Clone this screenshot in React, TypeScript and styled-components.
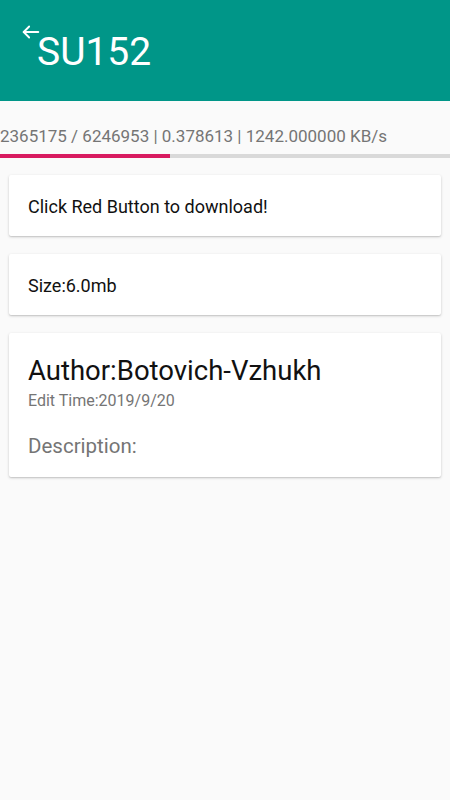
import styled, { createGlobalStyle } from "styled-components";

const GlobalStyle = createGlobalStyle`
  html, body {
    margin: 0;
    padding: 0;
    background: #fafafa;
    font-family: Roboto, "Noto Sans", sans-serif;
  }
`;

const Screen = styled.div`
  width: 450px;
  min-height: 800px;
  background: #fafafa;
`;

const Toolbar = styled.div`
  height: 101px;
  background: #009688;
  display: flex;
  align-items: flex-start;
  padding: 20px 0 0 20px;
  box-sizing: border-box;
  color: #ffffff;
`;

const BackIcon = styled.svg`
  width: 22px;
  height: 22px;
  margin-top: 1px;
  flex-shrink: 0;
`;

const Title = styled.div`
  font-size: 39px;
  line-height: 1;
  margin-left: -5px;
  margin-top: 13px;
`;

const Progress = styled.div`
  padding-top: 24px;
`;

const ProgressText = styled.div`
  font-size: 17px;
  color: #757575;
  white-space: nowrap;
  line-height: 22px;
`;

const Track = styled.div`
  margin-top: 7px;
  height: 4px;
  background: #d9d9d9;
`;

const Fill = styled.div`
  height: 100%;
  background: #d81b60;
`;

const Cards = styled.div`
  display: flex;
  flex-direction: column;
  gap: 18px;
  padding: 17px 9px 0;
`;

const Card = styled.div<{ $pad?: string }>`
  background: #ffffff;
  border-radius: 2px;
  box-shadow: 0 1px 3px rgba(0, 0, 0, 0.18), 0 1px 1px rgba(0, 0, 0, 0.08);
  padding: ${(p) => p.$pad || "19px"};
`;

const BodyText = styled.div`
  font-size: 18px;
  color: #111111;
  line-height: 24px;
`;

const Author = styled.div`
  font-size: 27.5px;
  color: #111111;
  line-height: 30px;
`;

const EditTime = styled.div`
  font-size: 16px;
  color: #757575;
  line-height: 20px;
  margin-top: 5px;
`;

const Description = styled.div`
  font-size: 20.5px;
  color: #757575;
  line-height: 24px;
  margin-top: 23px;
`;

const done = 2365175;
const total = 6246953;

export default function App() {
  return (
    <Screen>
      <GlobalStyle />
      <Toolbar>
        <BackIcon viewBox="0 0 24 24" fill="none" stroke="#fff" strokeWidth="2" strokeLinecap="round" strokeLinejoin="round">
          <path d="M20 12H4" />
          <path d="M10 6l-6 6 6 6" />
        </BackIcon>
        <Title>SU152</Title>
      </Toolbar>
      <Progress>
        <ProgressText>2365175 / 6246953 | 0.378613 | 1242.000000 KB/s</ProgressText>
        <Track>
          <Fill style={{ width: `${(done / total) * 100}%` }} />
        </Track>
      </Progress>
      <Cards>
        <Card $pad="20px 19px 17px">
          <BodyText>Click Red Button to download!</BodyText>
        </Card>
        <Card $pad="20px 19px 17px">
          <BodyText>Size:6.0mb</BodyText>
        </Card>
        <Card $pad="23px 19px 19px">
          <Author>Author:Botovich-Vzhukh</Author>
          <EditTime>Edit Time:2019/9/20</EditTime>
          <Description>Description:</Description>
        </Card>
      </Cards>
    </Screen>
  );
}
